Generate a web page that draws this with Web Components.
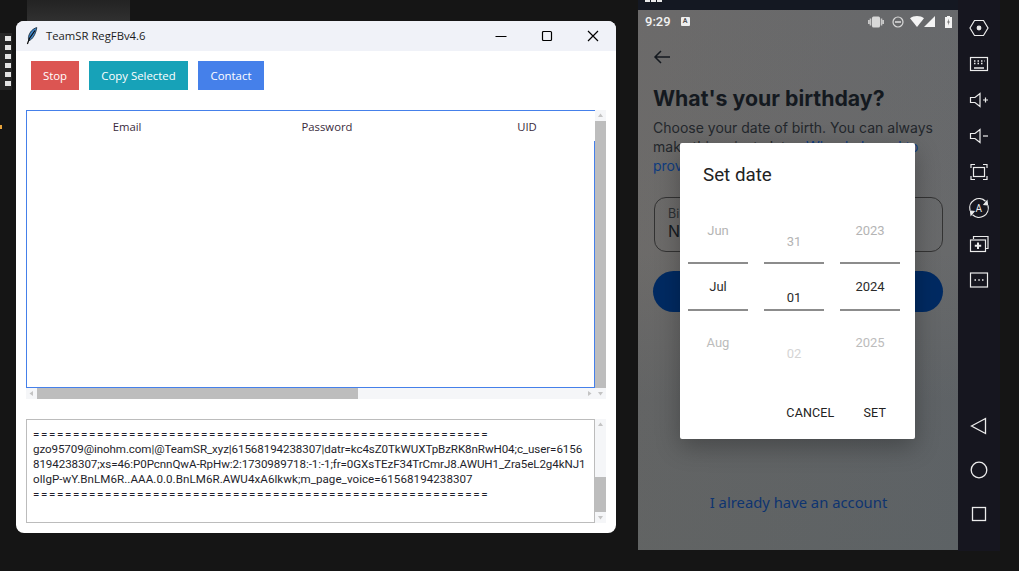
<!DOCTYPE html>
<html>
<head>
<meta charset="utf-8">
<title>TeamSR RegFB</title>
<style>
  html, body { margin: 0; height: 100%; background: #151515; overflow: hidden; }
</style>
</head>
<body>
<desk-top>
  <app-window slot="app" title="TeamSR RegFBv4.6">
    <action-bar>
      <tk-button color="#dc5552" width="48">Stop</tk-button>
      <tk-button color="#17a2b8" width="99">Copy Selected</tk-button>
      <tk-button color="#4580ea" width="66">Contact</tk-button>
    </action-bar>
    <tree-view></tree-view>
    <log-box>
      <div class="rule">=========================================================</div>
      <div class="tight">gzo95709@inohm.com|@TeamSR_xyz|61568194238307|datr=kc4sZ0TkWUXTpBzRK8nRwH04;c_user=6156</div>
      <div class="tight">8194238307;xs=46:P0PcnnQwA-RpHw:2:1730989718:-1:-1;fr=0GXsTEzF34TrCmrJ8.AWUH1_Zra5eL2g4kNJ1</div>
      <div class="loose">ollgP-wY.BnLM6R..AAA.0.0.BnLM6R.AWU4xA6lkwk;m_page_voice=61568194238307</div>
      <div class="rule">=========================================================</div>
    </log-box>
  </app-window>
  <phone-screen slot="phone"></phone-screen>
  <emu-toolbar slot="tools"></emu-toolbar>
</desk-top>

<script>
class DeskTop extends HTMLElement {
  constructor() {
    super();
    this.attachShadow({mode: 'open'});
    this.shadowRoot.innerHTML = `
      <style>
        :host { display: block; position: relative; width: 1019px; height: 571px; overflow: hidden; background: #151515; }
        .tab { position: absolute; left: 27px; top: 0; width: 103px; height: 21px; background: linear-gradient(#232323, #303030); }
        .dock { position: absolute; left: 0; top: 33px; width: 12px; height: 57px; background: #262626; display: flex; flex-direction: column; gap: 4px; align-items: flex-end; padding: 3px 0; box-sizing: border-box; }
        .dock i { display: block; width: 6px; height: 5px; background: #e4e4e4; margin-right: 1px; }
        .spark { position: absolute; left: 0; top: 125px; width: 2px; height: 4px; background: #e8a33c; }
        .frame { position: absolute; left: 638px; top: 0; width: 320px; height: 10px; background: #141822; display: flex; gap: 1px; padding-left: 7px; box-sizing: border-box; }
        .frame i { display: block; width: 5px; height: 2px; background: #e8e8e8; }
        .win { position: absolute; left: 16px; top: 21px; }
        .phone { position: absolute; left: 638px; top: 10px; }
        .tools { position: absolute; left: 958px; top: 0; }
      </style>
      <div class="tab"></div>
      <div class="dock"><i></i><i></i><i></i><i></i><i></i><i></i></div>
      <div class="spark"></div>
      <div class="frame"><i></i><i></i><i></i></div>
      <div class="win"><slot name="app"></slot></div>
      <div class="phone"><slot name="phone"></slot></div>
      <div class="tools"><slot name="tools"></slot></div>
    `;
  }
}

class AppWindow extends HTMLElement {
  constructor() {
    super();
    this.attachShadow({mode: 'open'});
  }
  connectedCallback() {
    const title = this.getAttribute('title');
    this.shadowRoot.innerHTML = `
      <style>
        :host { display: block; width: 600px; height: 512px; background: #fff; border-radius: 8px; overflow: hidden; font-family: "Open Sans", "Noto Sans", sans-serif; }
        .bar { height: 30px; box-sizing: border-box; padding: 0 0 1px 10px; background: #f0f2f8; display: flex; align-items: center; }
        .bar svg.feather { width: 12px; height: 18px; margin-right: 8px; }
        .bar span { font-size: 11.3px; color: #1c1c1c; flex: 1; }
        .ctl { width: 46px; height: 30px; display: flex; align-items: center; justify-content: center; }
        .ctl svg { width: 12px; height: 12px; stroke: #000; fill: none; stroke-width: 1.2; }
        .body { padding: 10px 10px 0; display: flex; flex-direction: column; }
      </style>
      <div class="bar">
        <svg class="feather" viewBox="0 0 12 18">
          <path d="M10.8 .6C7 1.5 3.6 5 2.6 9.5 2.2 11 2.5 12.6 3 13.6 6.5 12.6 9.8 7 10.8 .6Z" fill="#3f86c8" stroke="#10202c" stroke-width=".8"/>
          <path d="M9 3.5 3.4 11.5 1.4 17" fill="none" stroke="#0b0b0b" stroke-width="1.2"/>
        </svg>
        <span>${title}</span>
        <div class="ctl"><svg viewBox="0 0 12 12"><path d="M0.5 6.5H11.5"/></svg></div>
        <div class="ctl"><svg viewBox="0 0 12 12"><rect x="1.5" y="1.5" width="9" height="9" rx="1"/></svg></div>
        <div class="ctl"><svg viewBox="0 0 12 12"><path d="M1 1 11 11M11 1 1 11"/></svg></div>
      </div>
      <div class="body"><slot></slot></div>
    `;
  }
}

class ActionBar extends HTMLElement {
  constructor() {
    super();
    this.attachShadow({mode: 'open'});
    this.shadowRoot.innerHTML = `
      <style>
        :host { display: flex; gap: 10px; padding-left: 5px; margin-bottom: 20px; }
      </style>
      <slot></slot>
    `;
  }
}

class TkButton extends HTMLElement {
  constructor() {
    super();
    this.attachShadow({mode: 'open'});
  }
  connectedCallback() {
    this.shadowRoot.innerHTML = `
      <style>
        :host { display: flex; align-items: center; justify-content: center; height: 29px; width: ${this.getAttribute('width')}px;
          background: ${this.getAttribute('color')}; color: #fff; font-size: 11.4px; }
      </style>
      <slot></slot>
    `;
  }
}

class ScrollBar extends HTMLElement {
  constructor() {
    super();
    this.attachShadow({mode: 'open'});
  }
  connectedCallback() {
    const horizontal = this.getAttribute('orient') === 'h';
    const before = this.getAttribute('before');
    const thumb = this.getAttribute('thumb');
    const arrow = rot => `<svg viewBox="0 0 11 11" style="transform:rotate(${rot}deg)"><path d="M5.5 3.5 8 7H3Z" fill="#c4c4c4"/></svg>`;
    this.shadowRoot.innerHTML = `
      <style>
        :host { display: flex; flex-direction: ${horizontal ? 'row' : 'column'}; background: #f5f6f8;
          ${horizontal ? 'height: 11px;' : 'width: 11px;'} }
        svg { width: 11px; height: 11px; flex: none; }
        .gap { flex: none; ${horizontal ? 'width' : 'height'}: ${before}px; }
        .thumb { flex: none; background: #bdbdbd; ${horizontal ? 'width' : 'height'}: ${thumb}px; }
        .rest { flex: 1; }
      </style>
      ${arrow(horizontal ? -90 : 0)}
      <div class="gap"></div><div class="thumb"></div><div class="rest"></div>
      ${arrow(horizontal ? 90 : 180)}
    `;
  }
}

class TreeView extends HTMLElement {
  constructor() {
    super();
    this.attachShadow({mode: 'open'});
    this.shadowRoot.innerHTML = `
      <style>
        :host { display: grid; grid-template-columns: 569px 11px; grid-template-rows: 278px 11px; margin-bottom: 20px; }
        .table { position: relative; border: 1px solid #4580ea; border-right: 0; box-sizing: border-box; overflow: hidden; background: #fff; }
        .edge { position: absolute; right: 0; top: 30px; bottom: 0; width: 1px; background: #4580ea; }
        .head { display: grid; grid-template-columns: repeat(3, 200px); width: 600px; height: 30px; align-items: center; text-align: center; font-size: 11.3px; color: #3a2a3c; }
        scroll-bar[orient="v"] { grid-row: 1 / 3; grid-column: 2; }
      </style>
      <div class="table">
        <div class="head"><div>Email</div><div>Password</div><div>UID</div></div>
        <div class="edge"></div>
      </div>
      <scroll-bar orient="v" before="0" thumb="267"></scroll-bar>
      <scroll-bar orient="h" before="0" thumb="321"></scroll-bar>
    `;
  }
}

class LogBox extends HTMLElement {
  constructor() {
    super();
    this.attachShadow({mode: 'open'});
    this.shadowRoot.innerHTML = `
      <style>
        :host { display: grid; grid-template-columns: 569px 11px; height: 104px; }
        .text { border: 1px solid #bcbcbc; box-sizing: border-box; padding: 7px 0 0 6px; overflow: hidden; white-space: nowrap; font-family: "Roboto", sans-serif; font-size: 11.6px; line-height: 15px; color: #1f1f2c; }
        ::slotted(.rule) { letter-spacing: 1.64px; }
        ::slotted(.tight) { letter-spacing: -.09px; }
        ::slotted(.loose) { letter-spacing: .05px; }
      </style>
      <div class="text"><slot></slot></div>
      <scroll-bar orient="v" before="47" thumb="35"></scroll-bar>
    `;
  }
}

class StatusBar extends HTMLElement {
  constructor() {
    super();
    this.attachShadow({mode: 'open'});
    this.shadowRoot.innerHTML = `
      <style>
        :host { display: flex; align-items: center; height: 23px; padding: 0 6px 0 7px; font-family: "Roboto", sans-serif; color: #f1f1f1; }
        .time { font-size: 13px; font-weight: 500; margin-right: 10px; }
        .note { width: 9px; height: 9px; background: #eee; color: #555; font-size: 7px; font-weight: 700; line-height: 9px; text-align: center; border-radius: 1px; }
        .grow { flex: 1; }
        .icons { display: flex; align-items: center; gap: 7px; }
        svg { display: block; }
      </style>
      <span class="time">9:29</span>
      <span class="note">A</span>
      <span class="grow"></span>
      <div class="icons">
        <svg width="16" height="12" viewBox="0 0 16 12"><rect x="4" y="0.5" width="8" height="11" rx="1.5" fill="#d8d8d8"/><path d="M2.500 2.500V9.500M0.800 4V8M13.500 2.500V9.500M15.200 4V8" stroke="#c8c8c8" stroke-width="1.600"/></svg>
        <svg width="12" height="12" viewBox="0 0 12 12" style="margin-left:1px"><circle cx="6" cy="6" r="5" fill="none" stroke="#d8d8d8" stroke-width="1.2"/><path d="M3 6H9" stroke="#d8d8d8" stroke-width="1.6"/></svg>
        <svg width="27" height="11" viewBox="0 0 27 11" style="margin-left:-1px"><path d="M0 2.2C3.6-.6 10.4-.6 14 2.2L7 11Z" fill="#f4f4f4"/><path d="M27 0V11H16Z" fill="#f4f4f4" transform="translate(-2 0)"/></svg>
        <svg width="7" height="12" viewBox="0 0 7 12" style="margin-left:1px"><path d="M2 0H5V1H7V12H0V1H2Z" fill="#f4f4f4"/><path d="M4 2.5 2.2 6.5H3.4L3 9.5 4.8 5.5H3.6Z" fill="#666"/></svg>
      </div>
    `;
  }
}

class WheelColumn extends HTMLElement {
  constructor() {
    super();
    this.attachShadow({mode: 'open'});
  }
  connectedCallback() {
    const shift = Number(this.getAttribute('shift') || 0);
    const [a, b, c] = this.getAttribute('values').split(',');
    this.shadowRoot.innerHTML = `
      <style>
        :host { display: grid; grid-template-rows: 60px 45px 60px; width: 60px; text-align: center; font-family: "Roboto", sans-serif; font-size: 13px; line-height: 16px; }
        div { box-sizing: border-box; }
        .one { padding-top: ${21 + shift}px; color: #b4b4b4; border-bottom: 2px solid #8c8c8c; height: 62px; }
        .two { padding-top: ${15 + shift}px; color: #2b2b2b; border-bottom: 2px solid #8c8c8c; height: 47px; margin-top: 2px; }
        .three { padding-top: ${24 + shift}px; margin-top: 4px; color: ${shift ? '#d4d4d4' : '#bcbcbc'}; }
      </style>
      <div class="one">${a}</div>
      <div class="two">${b}</div>
      <div class="three">${c}</div>
    `;
  }
}

class DateDialog extends HTMLElement {
  constructor() {
    super();
    this.attachShadow({mode: 'open'});
    this.shadowRoot.innerHTML = `
      <style>
        :host { display: flex; flex-direction: column; width: 235px; height: 296px; background: #fff; border-radius: 2px; box-shadow: 0 8px 24px rgba(0,0,0,.28); font-family: "Roboto", sans-serif; }
        h2 { margin: 0; padding: 22px 0 0 23px; height: 37px; font-size: 18.800px; line-height: 21px; font-weight: 400; color: #222; }
        .wheels { display: flex; gap: 16px; padding-left: 8px; }
        .actions { display: flex; justify-content: flex-end; gap: 29px; padding: 39px 29px 0 0; font-size: 12.500px; line-height: 14px; font-weight: 400; color: #222; letter-spacing: .15px; }
      </style>
      <h2>Set date</h2>
      <div class="wheels">
        <wheel-column values="Jun,Jul,Aug"></wheel-column>
        <wheel-column shift="11" values="31,01,02"></wheel-column>
        <wheel-column values="2023,2024,2025"></wheel-column>
      </div>
      <div class="actions"><span>CANCEL</span><span>SET</span></div>
    `;
  }
}

class PhoneScreen extends HTMLElement {
  constructor() {
    super();
    this.attachShadow({mode: 'open'});
    this.shadowRoot.innerHTML = `
      <style>
        :host { display: block; position: relative; width: 320px; height: 540px; overflow: hidden;
          background: linear-gradient(100deg, rgba(125,112,100,.16), rgba(88,100,112,.16)), linear-gradient(#68696b 0%, #6a6a6a 45%, #5f6264 72%, #5e6263 100%);
          font-family: "Inter", sans-serif; }
        .page { padding: 0 15px; }
        .back { display: block; margin: 17px 0 0 0; }
        h1 { margin: 20px 0 0; font-size: 21.300px; line-height: 28px; font-weight: 700; color: #14191f; white-space: nowrap; }
        p { margin: 6px 0 0; font-size: 14px; line-height: 19px; color: #23272c; white-space: nowrap; font-weight: 400; }
        p a { color: #0f3c80; }
        .field { margin: 22px 0 0 1px; width: 289px; height: 55px; box-sizing: border-box; border: 1px solid #333; border-radius: 12px; padding: 8px 13px; color: #14191f; }
        .field small { display: block; font-size: 12.500px; line-height: 15px; color: #2b2f33; }
        .field b { font-weight: 400; font-size: 16px; line-height: 20px; }
        .cta { margin-top: 19px; width: 290px; height: 41px; border-radius: 21px; background: #002a62; }
        .login { position: absolute; left: 0; right: 0; top: 482px; padding-left: 1px; text-align: center; font-size: 14.800px; line-height: 20px; color: #0e3470; font-weight: 400; font-family: "Noto Sans", sans-serif; }
        date-dialog { position: absolute; left: 42px; top: 133px; }
      </style>
      <status-bar></status-bar>
      <div class="page">
        <svg class="back" width="18" height="14" viewBox="0 0 18 14"><path d="M17 7H2M8 1 2 7l6 6" fill="none" stroke="#14191f" stroke-width="1.5"/></svg>
        <h1>What's your birthday?</h1>
        <p>Choose your date of birth. You can always<br>make this private later. <a>Why do I need to</a><br><a>prov</a></p>
        <div class="field"><small>Bi</small><b>N</b></div>
        <div class="cta"></div>
      </div>
      <div class="login">I already have an account</div>
      <date-dialog></date-dialog>
    `;
  }
}

class EmuToolbar extends HTMLElement {
  constructor() {
    super();
    this.attachShadow({mode: 'open'});
    this.shadowRoot.innerHTML = `
      <style>
        :host { display: flex; flex-direction: column; align-items: center; width: 42px; height: 551px; background: #16161f; }
        svg { display: block; flex: none; width: 22px; height: 22px; fill: none; stroke: #ececec; stroke-width: 1.2; }
        .top { display: flex; flex-direction: column; gap: 14px; padding-top: 17px; }
        .nav { display: flex; flex-direction: column; gap: 22px; margin-top: 124px; }
        .nav svg { stroke-width: 1.3; }
        text { fill: #ececec; stroke: none; font: 400 10px "Roboto", sans-serif; }
      </style>
      <div class="top">
        <svg viewBox="0 0 22 22"><path d="M6.5 3.5H15.5L20 11 15.5 18.5H6.5L2 11Z"/><circle cx="11" cy="11" r="1.8" fill="#ececec"/></svg>
        <svg viewBox="0 0 22 22"><rect x="2.5" y="4.5" width="17" height="13"/><path d="M6 8H7.5M9.5 8H11M13 8H14.5M16 8H16.5M6 10.5H7.5M9.5 10.5H11M13 10.5H14.5M6 15H16" stroke-width="1.3"/></svg>
        <svg viewBox="0 0 22 22"><path d="M2.5 8.5H7L12 4.5V17.5L7 13.5H2.5Z"/><path d="M15 11H20M17.5 8.5V13.5"/></svg>
        <svg viewBox="0 0 22 22"><path d="M2.5 8.5H7L12 4.5V17.5L7 13.5H2.5Z"/><path d="M15 11H20"/></svg>
        <svg viewBox="0 0 22 22"><path d="M3 7V3.5H7M15 3.5H19V7M19 15V18.5H15M7 18.5H3V15"/><rect x="5.5" y="6.5" width="11" height="9"/></svg>
        <svg viewBox="0 0 22 22"><path d="M2 13.5A9.4 9.4 0 0 1 17.5 4.2M20 8.5A9.4 9.4 0 0 1 4.5 17.8"/><path d="M19.5 8 16 7.5 19 4ZM2.500 14 6 14.500 3 18Z" fill="#ececec"/><text x="7.500" y="14.800">A</text></svg>
        <svg viewBox="0 0 22 22"><path d="M5.500 6V3.500H20V15.500H17.500"/><rect x="2.500" y="7" width="15" height="11.500"/><path d="M10 9.500V16M6.800 12.700H13.200" stroke-width="2"/></svg>
        <svg viewBox="0 0 22 22"><rect x="2.500" y="4" width="17" height="14"/><path d="M6.500 11H8M10.300 11H11.800M14 11H15.500" stroke-width="1.500"/></svg>
      </div>
      <div class="nav">
        <svg viewBox="0 0 22 22"><path d="M3.500 11 17.500 3.500V18.500Z"/></svg>
        <svg viewBox="0 0 22 22"><circle cx="11" cy="11" r="7.800"/></svg>
        <svg viewBox="0 0 22 22"><rect x="4.500" y="4.500" width="13" height="13"/></svg>
      </div>
    `;
  }
}

customElements.define('scroll-bar', ScrollBar);
customElements.define('tree-view', TreeView);
customElements.define('log-box', LogBox);
customElements.define('tk-button', TkButton);
customElements.define('action-bar', ActionBar);
customElements.define('app-window', AppWindow);
customElements.define('status-bar', StatusBar);
customElements.define('wheel-column', WheelColumn);
customElements.define('date-dialog', DateDialog);
customElements.define('phone-screen', PhoneScreen);
customElements.define('emu-toolbar', EmuToolbar);
customElements.define('desk-top', DeskTop);
</script>
</body>
</html>
